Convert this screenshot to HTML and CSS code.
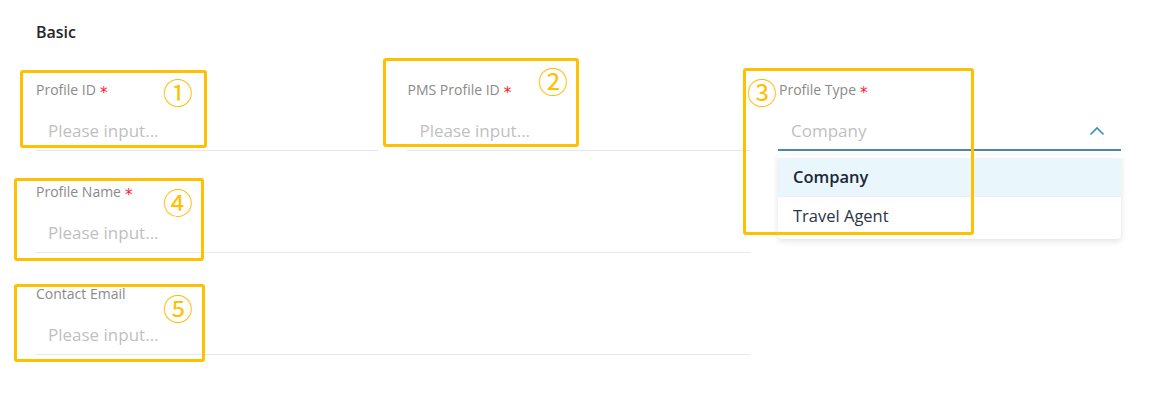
FILE: index.html
```html
<!DOCTYPE html>
<html>
<head>
<meta charset="utf-8">
<link rel="stylesheet" href="styles.css">
</head>
<body>
<div class="page">
  <h2 class="section-title">Basic</h2>
  <div class="form-grid">
    <div class="field">
      <div class="label">Profile ID<span class="req">*</span></div>
      <div class="input"><span class="placeholder">Please input...</span></div>
    </div>
    <div class="field">
      <div class="label">PMS Profile ID<span class="req">*</span></div>
      <div class="input"><span class="placeholder">Please input...</span></div>
    </div>
    <div class="field select-field">
      <div class="label">Profile Type<span class="req">*</span></div>
      <div class="input select">
        <span class="placeholder">Company</span>
        <svg class="chevron" width="16" height="10" viewBox="0 0 16 10"><path d="M1.5 8.5 L8 2 L14.5 8.5" fill="none" stroke="#3d8cbb" stroke-width="1.6"/></svg>
      </div>
      <ul class="dropdown">
        <li class="option active">Company</li>
        <li class="option">Travel Agent</li>
      </ul>
    </div>
    <div class="field wide">
      <div class="label">Profile Name<span class="req">*</span></div>
      <div class="input"><span class="placeholder">Please input...</span></div>
    </div>
    <div class="field wide">
      <div class="label">Contact Email</div>
      <div class="input"><span class="placeholder">Please input...</span></div>
    </div>
  </div>
</div>

<div class="mark box1"></div>
<div class="mark box2"></div>
<div class="mark box3"></div>
<div class="mark box4"></div>
<div class="mark box5"></div>
<span class="num n1">①</span>
<span class="num n2">②</span>
<span class="num n3">③</span>
<span class="num n4">④</span>
<span class="num n5">⑤</span>
</body>
</html>
```

FILE: styles.css
```css
html, body {
  margin: 0;
  padding: 0;
  background: #ffffff;
}
body {
  position: relative;
  width: 1160px;
  height: 402px;
  overflow: hidden;
  font-family: "Open Sans", "Noto Sans", sans-serif;
}
.page {
  padding: 21px 0 0 35px;
}
.section-title {
  margin: 0 0 36px 1px;
  font-size: 16px;
  line-height: 22px;
  font-weight: 600;
  color: #262626;
}
.form-grid {
  display: grid;
  grid-template-columns: repeat(3, 343px);
  column-gap: 28.5px;
  row-gap: 30px;
}
.field {
  position: relative;
  border-bottom: 1px solid #e8e8e8;
}
.field.wide {
  grid-column: 1 / span 2;
}
.label {
  height: 22px;
  font-size: 14px;
  line-height: 22px;
  color: #8a8a8a;
  padding-left: 1px;
}
.req {
  color: #f5222d;
  font-family: "DejaVu Sans", sans-serif;
  font-size: 15px;
  line-height: 1;
  margin-left: 4px;
  position: relative;
  top: 3px;
}
.input {
  display: flex;
  align-items: center;
  height: 24px;
  margin-top: 18px;
  padding: 0 16px 7px 13px;
}
.placeholder {
  font-size: 17px;
  line-height: 24px;
  color: #bfbfbf;
  flex: 1;
}
.select-field {
  border-bottom: 2px solid #4f85a6;
}
.select {
  padding-bottom: 6px;
}
.chevron {
  display: block;
}
.dropdown {
  position: absolute;
  left: 0;
  right: 0;
  top: 100%;
  margin: 6px 0 0;
  padding: 3px 0 4px;
  list-style: none;
  background: #ffffff;
  border-radius: 0 0 4px 4px;
  box-shadow: 0 2px 6px rgba(0, 0, 0, 0.12);
  z-index: 2;
}
.option {
  height: 38px;
  line-height: 38px;
  padding-left: 15px;
  font-size: 16.5px;
  color: #2b3445;
}
.option + .option {
  border-top: 1px solid #eeeeee;
}
.option.active {
  background: #e9f7fd;
  font-weight: 600;
  color: #1f2633;
}

.mark {
  position: absolute;
  box-sizing: border-box;
  border: 3px solid #ffc000;
  border-radius: 3px;
  z-index: 5;
}
.box1 { left: 20px; top: 70px; width: 187px; height: 78px; }
.box2 { left: 383px; top: 58px; width: 196px; height: 89px; }
.box3 { left: 743px; top: 68px; width: 231px; height: 167px; }
.box4 { left: 14px; top: 178px; width: 190px; height: 83px; }
.box5 { left: 14px; top: 284px; width: 191px; height: 78px; }

.num {
  position: absolute;
  width: 30px;
  height: 30px;
  font-family: "Noto Sans CJK SC", "DejaVu Sans", sans-serif;
  font-size: 30px;
  line-height: 30px;
  color: #ffc000;
  text-align: center;
  z-index: 6;
}
.n1 { left: 163px; top: 76px; }
.n2 { left: 538px; top: 65px; }
.n3 { left: 747px; top: 76px; }
.n4 { left: 163px; top: 186px; }
.n5 { left: 163px; top: 292px; }
```
